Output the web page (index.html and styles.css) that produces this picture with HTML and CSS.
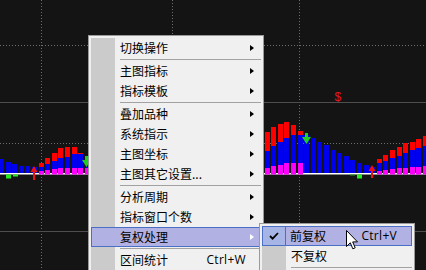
FILE: index.html
```html
<!DOCTYPE html>
<html lang="zh">
<head>
<meta charset="utf-8">
<title>K线 右键菜单</title>
<link rel="stylesheet" href="styles.css">
</head>
<body>
<div class="screen">
  <svg class="chart" width="426" height="270" viewBox="0 0 426 270" xmlns="http://www.w3.org/2000/svg">
    <rect x="0" y="0" width="426" height="270" fill="#141414"/>
    <g stroke="#6e6e6e" stroke-width="1" stroke-dasharray="1 2">
      <line x1="0" y1="45.5" x2="426" y2="45.5"/>
      <line x1="0" y1="143.5" x2="426" y2="143.5"/>
      <line x1="41.5" y1="0" x2="41.5" y2="270"/>
      <line x1="172.5" y1="0" x2="172.5" y2="270"/>
      <line x1="299.5" y1="0" x2="299.5" y2="270"/>
    </g>
    <g stroke="#4e4e4e" stroke-width="1">
      <line x1="0" y1="102.5" x2="426" y2="102.5"/>
      <line x1="0" y1="231.5" x2="426" y2="231.5"/>
    </g>
    <rect x="0" y="173" width="426" height="1.5" fill="#ffffff"/>
    <!-- left bars -->
    <g>
      <rect x="-1" y="159" width="5" height="14" fill="#0000f0"/>
      <rect x="6" y="162" width="5" height="11" fill="#0000f0"/>
      <rect x="12" y="164" width="5" height="9" fill="#0000f0"/>
      <rect x="19" y="166" width="5" height="7" fill="#0000f0"/>
      <rect x="25" y="166" width="5" height="7" fill="#0000f0"/>
      <rect x="32" y="167" width="5" height="6" fill="#0000f0"/>

      <rect x="39" y="163" width="5" height="4" fill="#ff0000"/>
      <rect x="39" y="167" width="5" height="4" fill="#0000f0"/>
      <rect x="39" y="171" width="5" height="3.5" fill="#ff00ff"/>

      <rect x="45" y="158" width="5" height="6" fill="#ff0000"/>
      <rect x="45" y="164" width="5" height="6" fill="#0000f0"/>
      <rect x="45" y="170" width="5" height="4.5" fill="#ff00ff"/>

      <rect x="52" y="153" width="5" height="8" fill="#ff0000"/>
      <rect x="52" y="161" width="5" height="8" fill="#0000f0"/>
      <rect x="52" y="169" width="5" height="5.5" fill="#ff00ff"/>

      <rect x="58" y="148" width="5" height="10" fill="#ff0000"/>
      <rect x="58" y="158" width="5" height="10" fill="#0000f0"/>
      <rect x="58" y="168" width="5" height="6.5" fill="#ff00ff"/>

      <rect x="65" y="147" width="5" height="10" fill="#ff0000"/>
      <rect x="65" y="157" width="5" height="11" fill="#0000f0"/>
      <rect x="65" y="168" width="5" height="6.5" fill="#ff00ff"/>

      <rect x="72" y="147" width="5" height="7" fill="#ff0000"/>
      <rect x="72" y="154" width="5" height="14" fill="#0000f0"/>
      <rect x="72" y="168" width="5" height="6.5" fill="#ff00ff"/>

      <rect x="78" y="153" width="5" height="1" fill="#ff0000"/>
      <rect x="78" y="154" width="5" height="14" fill="#0000f0"/>
      <rect x="78" y="168" width="5" height="6.5" fill="#ff00ff"/>

      <rect x="85" y="158" width="5" height="10" fill="#0000f0"/>
      <rect x="85" y="168" width="5" height="6.5" fill="#ff00ff"/>
    </g>
    <!-- right bars -->
    <g>
      <rect x="265" y="132" width="5" height="19" fill="#ff0000"/>
      <rect x="265" y="151" width="5" height="17" fill="#0000f0"/>
      <rect x="265" y="168" width="5" height="6.5" fill="#ff00ff"/>

      <rect x="271" y="127" width="5" height="19" fill="#ff0000"/>
      <rect x="271" y="146" width="5" height="20" fill="#0000f0"/>
      <rect x="271" y="166" width="5" height="8.5" fill="#ff00ff"/>

      <rect x="278" y="124" width="5" height="18" fill="#ff0000"/>
      <rect x="278" y="142" width="5" height="23" fill="#0000f0"/>
      <rect x="278" y="165" width="5" height="9.5" fill="#ff00ff"/>

      <rect x="284" y="122" width="5" height="16" fill="#ff0000"/>
      <rect x="284" y="138" width="5" height="25" fill="#0000f0"/>
      <rect x="284" y="163" width="5" height="11.5" fill="#ff00ff"/>

      <rect x="291" y="125" width="5" height="10" fill="#ff0000"/>
      <rect x="291" y="135" width="5" height="28" fill="#0000f0"/>
      <rect x="291" y="163" width="5" height="11.5" fill="#ff00ff"/>

      <rect x="298" y="131" width="5" height="4" fill="#ff0000"/>
      <rect x="298" y="135" width="5" height="28" fill="#0000f0"/>
      <rect x="298" y="163" width="5" height="11.5" fill="#ff00ff"/>

      <rect x="304" y="135" width="5" height="38" fill="#0000f0"/>
      <rect x="311" y="138" width="5" height="35" fill="#0000f0"/>
      <rect x="317" y="142" width="5" height="31" fill="#0000f0"/>
      <rect x="324" y="145" width="5" height="28" fill="#0000f0"/>
      <rect x="331" y="150" width="5" height="23" fill="#0000f0"/>
      <rect x="337" y="153" width="5" height="20" fill="#0000f0"/>
      <rect x="344" y="156" width="5" height="17" fill="#0000f0"/>
      <rect x="350" y="160" width="5" height="13" fill="#0000f0"/>
      <rect x="357" y="163" width="5" height="10" fill="#0000f0"/>
      <rect x="364" y="165" width="5" height="8" fill="#0000f0"/>
      <rect x="370" y="167" width="5" height="6" fill="#0000f0"/>

      <rect x="377" y="159" width="5" height="4" fill="#ff0000"/>
      <rect x="377" y="163" width="5" height="8" fill="#0000f0"/>
      <rect x="377" y="171" width="5" height="3.5" fill="#ff00ff"/>

      <rect x="383" y="155" width="5" height="6" fill="#ff0000"/>
      <rect x="383" y="161" width="5" height="9" fill="#0000f0"/>
      <rect x="383" y="170" width="5" height="4.5" fill="#ff00ff"/>

      <rect x="390" y="150" width="5" height="8" fill="#ff0000"/>
      <rect x="390" y="158" width="5" height="11" fill="#0000f0"/>
      <rect x="390" y="169" width="5" height="5.5" fill="#ff00ff"/>

      <rect x="397" y="147" width="5" height="9" fill="#ff0000"/>
      <rect x="397" y="156" width="5" height="12" fill="#0000f0"/>
      <rect x="397" y="168" width="5" height="6.5" fill="#ff00ff"/>

      <rect x="403" y="143" width="5" height="10" fill="#ff0000"/>
      <rect x="403" y="153" width="5" height="15" fill="#0000f0"/>
      <rect x="403" y="168" width="5" height="6.5" fill="#ff00ff"/>

      <rect x="410" y="142" width="5" height="8" fill="#ff0000"/>
      <rect x="410" y="150" width="5" height="17" fill="#0000f0"/>
      <rect x="410" y="167" width="5" height="7.5" fill="#ff00ff"/>

      <rect x="416" y="139" width="5" height="9" fill="#ff0000"/>
      <rect x="416" y="148" width="5" height="19" fill="#0000f0"/>
      <rect x="416" y="167" width="5" height="7.5" fill="#ff00ff"/>

      <rect x="423" y="136" width="5" height="10" fill="#ff0000"/>
      <rect x="423" y="146" width="5" height="20" fill="#0000f0"/>
      <rect x="423" y="166" width="5" height="8.5" fill="#ff00ff"/>
    </g>
    <!-- signals -->
    <rect x="6" y="174.5" width="5" height="4" fill="#22ee22"/>
    <rect x="13" y="174.5" width="5" height="2" fill="#22ee22"/>
    <rect x="357" y="174.5" width="5" height="4" fill="#22ee22"/>
    <rect x="350" y="174.5" width="5" height="1" fill="#2a9a2a"/>
    <g fill="#ee1111">
      <polygon points="30.5,172 34,166 37.5,172"/>
      <rect x="33" y="172" width="2" height="8"/>
      <polygon points="368.5,171 372,165 375.5,171"/>
      <rect x="371" y="171" width="2" height="7"/>
    </g>
    <g fill="#22cc22">
      <rect x="305" y="133" width="3" height="4"/>
      <polygon points="302,137 311,137 306.5,144"/>
      <rect x="85" y="156" width="3" height="4"/>
      <polygon points="82,160 91,160 86.5,167"/>
    </g>
    <text x="334.5" y="101" class="sig-text">$</text>
  </svg>

  <div class="menu main-menu">
    <div class="list">
      <div class="item has-sub">切换操作</div>
      <div class="sep"></div>
      <div class="item has-sub">主图指标</div>
      <div class="item has-sub">指标模板</div>
      <div class="sep"></div>
      <div class="item has-sub">叠加品种</div>
      <div class="item has-sub">系统指示</div>
      <div class="item has-sub">主图坐标</div>
      <div class="item has-sub">主图其它设置...</div>
      <div class="sep"></div>
      <div class="item has-sub">分析周期</div>
      <div class="item has-sub">指标窗口个数</div>
      <div class="item has-sub active">复权处理</div>
      <div class="sep"></div>
      <div class="item">区间统计<span class="key">Ctrl+W</span></div>
    </div>
  </div>

  <div class="menu submenu">
    <div class="list">
      <div class="item active checked">
        <span class="check"><svg width="10" height="8" viewBox="0 0 10 8"><path d="M1 4 L3.6 6.6 L9 1" fill="none" stroke="#000" stroke-width="1.8"/></svg></span>
        <span class="label">前复权</span><span class="key">Ctrl+V</span>
      </div>
      <div class="item">不复权</div>
      <div class="sep"></div>
    </div>
  </div>

  <svg class="cursor" width="13" height="21" viewBox="0 0 13 21">
    <path d="M0.5 0.5 V16.5 L4.3 12.8 L6.8 18.8 L9.2 17.8 L6.7 11.9 H11.5 Z" fill="#ffffff" stroke="#000000" stroke-width="1" stroke-linejoin="miter"/>
  </svg>
</div>
</body>
</html>
```

FILE: styles.css
```css
* {
  box-sizing: border-box;
}

html,
body {
  margin: 0;
  padding: 0;
}

body {
  width: 426px;
  height: 270px;
  overflow: hidden;
  background: #141414;
  font-family: "Noto Sans CJK SC", "Noto Sans", sans-serif;
  font-size: 12px;
  color: #000;
}

.screen {
  position: relative;
  width: 426px;
  height: 270px;
  overflow: hidden;
}

.chart {
  display: block;
}

.sig-text {
  font-family: "Liberation Sans", sans-serif;
  font-size: 12px;
  fill: #e8141c;
}

.menu {
  position: absolute;
  background: #f0f0f0;
  border: 1px solid #9a9a9a;
  padding: 2px;
}

.main-menu {
  left: 88px;
  top: 35px;
  width: 176px;
  height: 260px;
}

.submenu {
  left: 259px;
  top: 223px;
  width: 156px;
  height: 70px;
}

.list {
  height: 100%;
  background: linear-gradient(to right, #cbcbcb 0, #cbcbcb 24px, #f0f0f0 24px);
}

.item {
  display: flex;
  align-items: center;
  height: 20px;
  line-height: 20px;
  padding-left: 29px;
  padding-right: 7px;
  white-space: nowrap;
}

.item.has-sub::after {
  content: "";
  margin-left: auto;
  width: 0;
  height: 0;
  border-left: 4px solid #000;
  border-top: 3.5px solid transparent;
  border-bottom: 3.5px solid transparent;
}

.key {
  margin-left: auto;
  margin-right: 8px;
  font-family: "Open Sans", "Noto Sans", sans-serif;
  font-size: 12px;
  letter-spacing: 0.3px;
}

.item.active {
  background: #b1b1e3;
  border: 1px solid #4a70c6;
  padding-left: 28px;
  padding-right: 6px;
}

.item.active.has-sub::after {
  border-left-color: #ffffff;
}

.item.checked {
  padding-left: 0;
}

.check {
  display: flex;
  align-items: center;
  justify-content: center;
  width: 23px;
  height: 100%;
  margin-right: 4px;
  border-right: 1px solid #4a70c6;
  background: #a7b4e6;
}

.sep {
  display: flex;
  align-items: center;
  height: 3px;
  margin-left: 29px;
}

.sep::before {
  content: "";
  flex: 1;
  height: 1px;
  background: #a2a2a2;
}

.cursor {
  position: absolute;
  left: 346px;
  top: 230px;
}
```
